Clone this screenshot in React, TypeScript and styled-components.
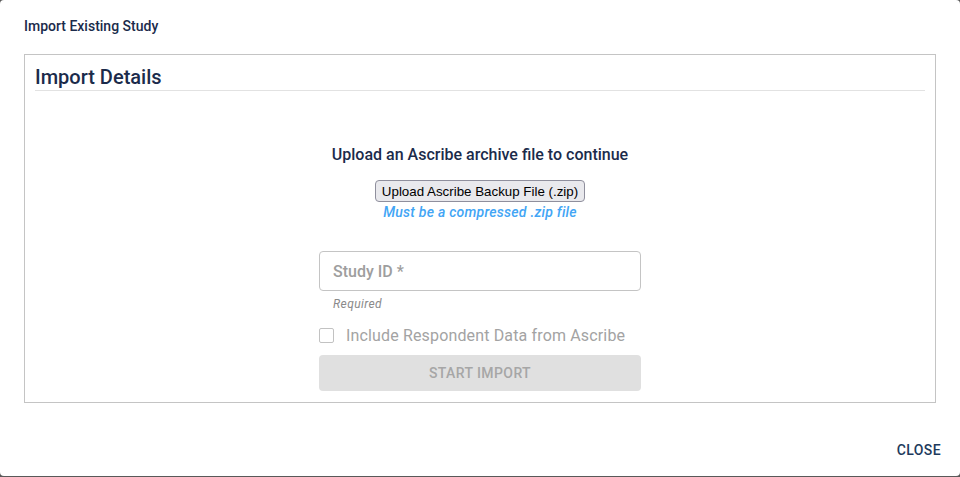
import React from "react";
import styled, { createGlobalStyle } from "styled-components";

const Global = createGlobalStyle`
  html, body { margin: 0; padding: 0; background: #595959; }
  body { font-family: Roboto, "Noto Sans", Arial, sans-serif; }
  * { box-sizing: border-box; }
`;

const Dialog = styled.div`
  width: 960px;
  height: 476px;
  background: #fff;
  border-radius: 4px;
  display: flex;
  flex-direction: column;
  color: #1b2b4b;
`;

const Title = styled.h2`
  margin: 0;
  padding: 16px 24px 18px;
  font-size: 14px;
  line-height: 20px;
  font-weight: 500;
  color: #1b2b4b;
`;

const Box = styled.section`
  margin: 0 24px;
  height: 349px;
  border: 1px solid #c4c4c4;
  padding: 10px 10px 0;
  display: flex;
  flex-direction: column;
`;

const BoxHeader = styled.h3`
  margin: 0;
  font-size: 20px;
  line-height: 24px;
  font-weight: 500;
  color: #1b2b4b;
  padding-bottom: 1px;
  border-bottom: 1px solid #e2e2e2;
`;

const Center = styled.div`
  display: flex;
  flex-direction: column;
  align-items: center;
  margin-top: 52px;
`;

const Lead = styled.p`
  margin: 0;
  font-size: 16px;
  line-height: 24px;
  font-weight: 500;
  color: #1b2b4b;
`;

const FileButton = styled.button`
  margin-top: 13px;
  height: 22px;
  padding: 0 6px;
  font-family: "Liberation Sans", Arial, sans-serif;
  font-size: 13.33px;
  color: #000;
  background: #e9e9ed;
  border: 1px solid #8f8f9d;
  border-radius: 4px;
`;

const Hint = styled.div`
  margin-top: 2px;
  font-size: 14px;
  line-height: 16px;
  font-weight: 500;
  font-style: italic;
  color: #42a5f5;
  letter-spacing: 0.25px;
`;

const Column = styled.div`
  width: 322px;
  margin-top: 31px;
  display: flex;
  flex-direction: column;
`;

const Field = styled.div`
  height: 40px;
  border: 1px solid #c4c4c4;
  border-radius: 4px;
  display: flex;
  align-items: center;
  padding: 0 13px;
`;

const FieldLabel = styled.span`
  font-size: 16px;
  font-weight: 500;
  color: #9e9e9e;
`;

const Helper = styled.div`
  margin-top: 6px;
  padding-left: 14px;
  font-size: 12px;
  line-height: 14px;
  font-style: italic;
  color: #8a8a8a;
  letter-spacing: 0.4px;
`;

const CheckRow = styled.label`
  margin-top: 12px;
  height: 24px;
  display: flex;
  align-items: center;
  gap: 12px;
  font-size: 16px;
  letter-spacing: 0.15px;
  color: #a3a3a3;
`;

const Check = styled.span`
  width: 15px;
  height: 15px;
  border: 1.5px solid #c2c2c2;
  border-radius: 2px;
  flex: none;
`;

const StartButton = styled.button`
  margin-top: 8px;
  height: 36px;
  width: 100%;
  border: none;
  border-radius: 4px;
  background: #e0e0e0;
  color: #a6a6a6;
  font-family: Roboto, sans-serif;
  font-size: 14px;
  font-weight: 500;
  letter-spacing: 0.4px;
  text-transform: uppercase;
`;

const Actions = styled.div`
  margin-top: auto;
  display: flex;
  justify-content: flex-end;
  padding: 0 11px 8px;
`;

const TextButton = styled.button`
  height: 36px;
  padding: 6px 8px;
  border: none;
  background: transparent;
  font-family: Roboto, sans-serif;
  font-size: 14px;
  font-weight: 500;
  letter-spacing: 0.4px;
  color: #1d3a5c;
`;

export default function App() {
  return (
    <>
      <Global />
      <Dialog>
        <Title>Import Existing Study</Title>
        <Box>
          <BoxHeader>Import Details</BoxHeader>
          <Center>
            <Lead>Upload an Ascribe archive file to continue</Lead>
            <FileButton>Upload Ascribe Backup File (.zip)</FileButton>
            <Hint>Must be a compressed .zip file</Hint>
            <Column>
              <Field>
                <FieldLabel>Study ID *</FieldLabel>
              </Field>
              <Helper>Required</Helper>
              <CheckRow>
                <Check />
                Include Respondent Data from Ascribe
              </CheckRow>
              <StartButton>Start Import</StartButton>
            </Column>
          </Center>
        </Box>
        <Actions>
          <TextButton>CLOSE</TextButton>
        </Actions>
      </Dialog>
    </>
  );
}
